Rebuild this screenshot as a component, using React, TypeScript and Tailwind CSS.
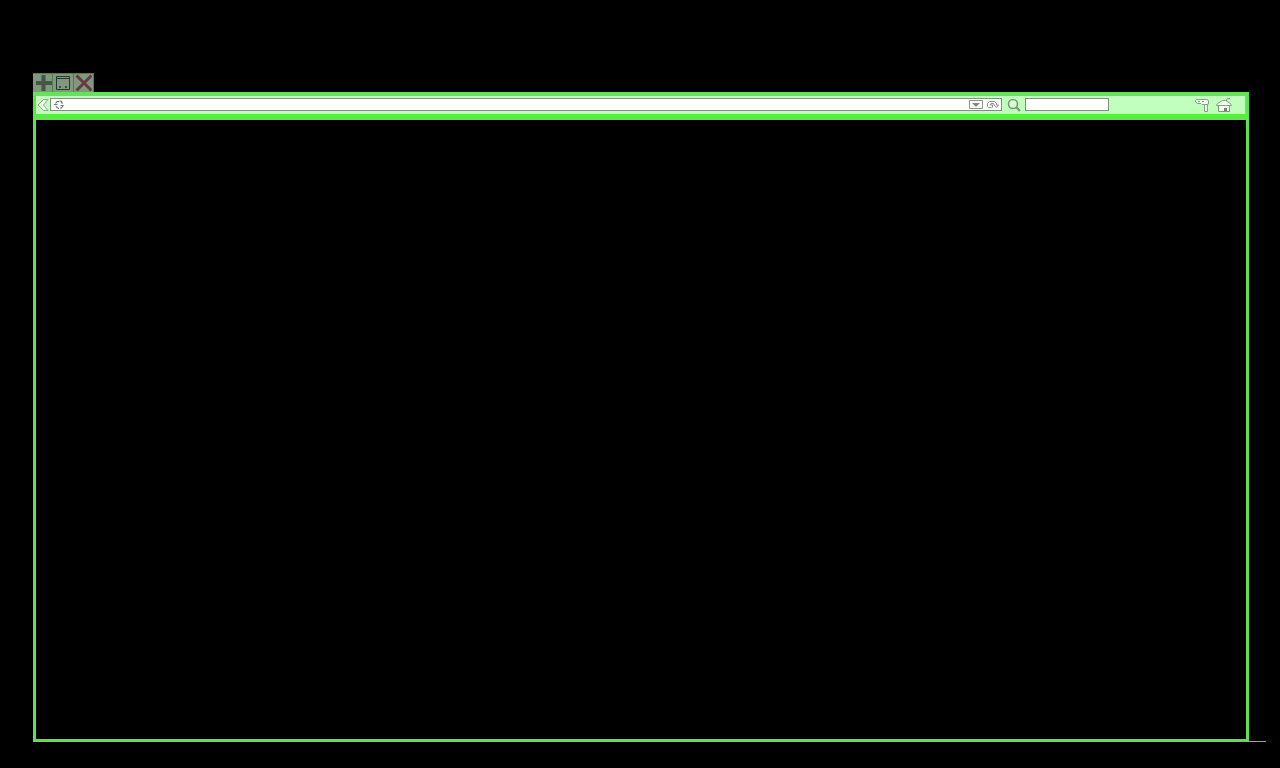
import React from "react";

const PlusIcon = () => (
  <svg viewBox="0 0 18 18" className="h-[18px] w-[18px]" aria-hidden="true">
    <path d="M9.500 1v16M2 9h16" stroke="#465646" strokeWidth="4" fill="none" />
  </svg>
);

const WindowIcon = () => (
  <svg viewBox="0 0 18 18" className="h-[18px] w-[18px]" aria-hidden="true">
    <path d="M2.500 2.500h13v13h-13zM2.500 4.500h13" stroke="#2b382b" strokeWidth="1" fill="none" />
    <path d="M5 13h2M11 13h2" stroke="#2b382b" strokeWidth="1.5" fill="none" />
  </svg>
);

const CloseIcon = () => (
  <svg viewBox="0 0 18 18" className="h-[18px] w-[18px]" aria-hidden="true">
    <path d="M2.500 1.500l15 15M17.500 1.500l-15 15" stroke="#643c40" strokeWidth="3" fill="none" />
  </svg>
);

const BackIcon = () => (
  <svg viewBox="0 0 13 14" className="h-[14px] w-[13px]" aria-hidden="true">
    <path
      d="M6.500 1.500h4.500L6.500 7l4.500 5.500H6.500L1 7z"
      stroke="#8fa58d"
      strokeWidth="1"
      fill="#f6fff4"
    />
  </svg>
);

const SiteIcon = () => (
  <svg viewBox="0 0 12 12" className="h-3 w-3" aria-hidden="true">
    <path
      d="M1 5.500h3.500M2.500 4.500L4 2.500h2M6.500 2l2 .5v1.500H10M7.500 6.500h2.500L8.500 9H7M6 9.500L4 8.500 3 7"
      stroke="#777"
      strokeWidth="1.2"
      fill="none"
    />
  </svg>
);

const DropdownIcon = () => (
  <svg viewBox="0 0 14 10" className="h-[10px] w-[14px]" aria-hidden="true">
    <path d="M.5.5h13v8H.5z" stroke="#8a978a" fill="#fff" />
    <path d="M3 3h8L7 7z" fill="#858585" />
  </svg>
);

const ReloadIcon = () => (
  <svg viewBox="0 0 14 10" className="h-[10px] w-[14px]" aria-hidden="true">
    <path
      d="M5.500 7.500h-3l-1-1v-3l2-2h5l2 2V5h2l-2 2.500-2.500-2.500V4L7 3.500H5L4 5h2.500v2.500"
      stroke="#8a8a8a"
      strokeWidth="1"
      fill="none"
    />
  </svg>
);

const SearchIcon = () => (
  <svg viewBox="0 0 14 14" className="h-[14px] w-[14px]" aria-hidden="true">
    <circle cx="6" cy="6" r="4.5" stroke="#7c967a" strokeWidth="1.6" fill="#d5ffd2" />
    <path d="M9 9l4 4" stroke="#7c967a" strokeWidth="2.2" />
  </svg>
);

const ToolsIcon = () => (
  <svg viewBox="0 0 15 14" className="h-[14px] w-[15px]" aria-hidden="true">
    <path
      d="M1.500 1.500h10.500l1.500 1v3.500h-1v7.500H9.500V6.500H7l-1-1H2.500l-2-1.500v-1.500z"
      stroke="#85a083"
      strokeWidth="1"
      fill="#f4fff2"
    />
    <path d="M3 3.500h2M7 3.500h2M9.500 6.500h3" stroke="#85a083" strokeWidth="1" fill="none" />
  </svg>
);

const HomeIcon = () => (
  <svg viewBox="0 0 16 16" className="h-4 w-4" aria-hidden="true">
    <path d="M2.500 8.500h11v6h-11z" stroke="#7d967d" fill="#f4fff2" />
    <path d="M.5 8.500l1-2 5-3h3l5 3 1 2z" stroke="#8aa388" fill="#f4fff2" />
    <path d="M10.500 4V2.500l1.500-1h2" stroke="#7d967d" fill="none" />
    <path d="M8 11h3v3H8z" fill="#6f866f" />
  </svg>
);

const WindowControls = () => (
  <div className="flex h-[19px] w-[61px] gap-px border-t border-r border-[#4d804a] bg-[#4d804a]">
    <button type="button" aria-label="New" className="flex flex-1 items-center justify-center bg-[#819780]">
      <PlusIcon />
    </button>
    <button type="button" aria-label="Window" className="flex flex-1 items-center justify-center bg-[#819780]">
      <WindowIcon />
    </button>
    <button type="button" aria-label="Close" className="flex flex-1 items-center justify-center bg-[#819780]">
      <CloseIcon />
    </button>
  </div>
);

const Toolbar = () => (
  <header className="border-x-3 border-t-4 border-b-6 border-x-[#5ee44c] border-t-[#66e25a] border-b-[#5aec44] bg-[#c0ffbd]">
    <div className="flex h-[18px] items-center border-r border-[#8fcf8b] pb-px">
      <button type="button" aria-label="Back" className="ml-px">
        <BackIcon />
      </button>
      <div className="flex h-[13px] flex-1 items-center border border-[#7f917f] bg-white pl-0.5">
        <SiteIcon />
        <input
          type="text"
          aria-label="Address"
          className="h-full min-w-0 flex-1 bg-transparent px-1 font-['Liberation_Sans',sans-serif] text-[10px] outline-none"
        />
        <button type="button" aria-label="History" className="mr-[3px]">
          <DropdownIcon />
        </button>
        <button type="button" aria-label="Reload" className="mr-px">
          <ReloadIcon />
        </button>
      </div>
      <label htmlFor="search" aria-label="Search" className="mx-1 pl-px">
        <SearchIcon />
      </label>
      <input
        id="search"
        type="text"
        className="h-[13px] w-[84px] border border-[#7f917f] bg-white px-1 font-['Liberation_Sans',sans-serif] text-[10px] outline-none"
      />
      <div className="ml-auto flex items-center gap-1.5 pl-[86px] pr-[13px]">
        <button type="button" aria-label="Tools">
          <ToolsIcon />
        </button>
        <button type="button" aria-label="Home">
          <HomeIcon />
        </button>
      </div>
    </div>
  </header>
);

export default function App() {
  return (
    <div className="flex min-h-screen flex-col bg-black pt-[73px] pr-[31px] pb-[26px] pl-[33px]">
      <WindowControls />
      <Toolbar />
      <main className="relative flex-1 border-x-3 border-b-3 border-[#5fe050]">
        <span className="absolute -bottom-[3px] left-full ml-[3px] h-px w-[17px] bg-[#63d458]" />
      </main>
    </div>
  );
}
